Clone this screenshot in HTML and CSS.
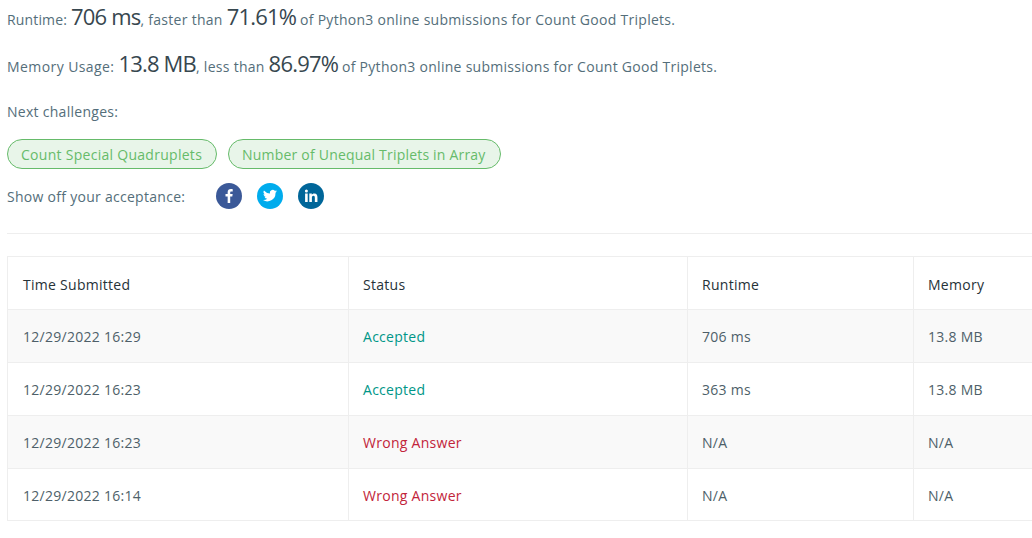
FILE: index.html
```html
<!DOCTYPE html>
<html lang="en">

<head>
    <meta charset="UTF-8">
    <title>Submission Detail</title>
    <link rel="stylesheet" href="styles.css">
</head>

<body>
    <div class="container">
        <p class="result"><span class="label-runtime">Runtime:</span> <span class="big">706 ms</span>, faster than <span class="big">71.61%</span> of Python3 online submissions for Count Good Triplets.</p>
        <p class="result"><span class="label-memory">Memory Usage:</span> <span class="big">13.8 MB</span>, less than <span class="big">86.97%</span> of Python3 online submissions for Count Good Triplets.</p>
        <p class="next-title">Next challenges:</p>
        <div class="tags">
            <a class="tag" href="#">Count Special Quadruplets</a>
            <a class="tag" href="#">Number of Unequal Triplets in Array</a>
        </div>
        <div class="share">
            <span class="share-label">Show off your acceptance:</span>
            <a class="share-icon facebook" href="#">
                <svg viewBox="0 0 26 26" width="26" height="26"><path fill="#fff" d="M14.2 20v-6.4h2.1l.35-2.5h-2.45V9.6c0-.72.2-1.2 1.23-1.2h1.3V6.15c-.23-.03-1-.1-1.9-.1-1.88 0-3.17 1.15-3.17 3.26v1.8H9.5v2.5h2.16V20z"/></svg>
            </a>
            <a class="share-icon twitter" href="#">
                <svg viewBox="0 0 26 26" width="26" height="26"><path fill="#fff" d="M20 8.3c-.52.23-1.07.38-1.65.45.6-.36 1.05-.92 1.26-1.58-.55.33-1.17.56-1.82.69a2.87 2.87 0 0 0-4.9 2.62A8.15 8.15 0 0 1 6.97 7.5a2.87 2.87 0 0 0 .89 3.83 2.85 2.85 0 0 1-1.3-.36v.04c0 1.39.99 2.55 2.3 2.81-.42.12-.87.13-1.3.05.37 1.14 1.43 1.97 2.68 2A5.76 5.76 0 0 1 6 17.06a8.12 8.12 0 0 0 12.5-6.84v-.37c.57-.41 1.08-.92 1.5-1.55z"/></svg>
            </a>
            <a class="share-icon linkedin" href="#">
                <svg viewBox="0 0 26 26" width="26" height="26"><path fill="#fff" d="M7.1 10.6h2.6V19H7.1zM8.4 6.5a1.5 1.5 0 1 1 0 3 1.5 1.5 0 0 1 0-3zM11.3 10.6h2.5v1.15h.04c.35-.66 1.2-1.35 2.47-1.35 2.64 0 3.13 1.74 3.13 4V19h-2.6v-4.1c0-.98-.02-2.24-1.36-2.24-1.37 0-1.58 1.07-1.58 2.17V19h-2.6z"/></svg>
            </a>
        </div>
        <hr class="divider">
        <table class="submissions">
            <thead>
                <tr>
                    <th class="col-time">Time Submitted</th>
                    <th class="col-status">Status</th>
                    <th class="col-runtime">Runtime</th>
                    <th class="col-memory">Memory</th>
                </tr>
            </thead>
            <tbody>
                <tr>
                    <td>12/29/2022 16:29</td>
                    <td class="accepted">Accepted</td>
                    <td>706 ms</td>
                    <td>13.8 MB</td>
                </tr>
                <tr>
                    <td>12/29/2022 16:23</td>
                    <td class="accepted">Accepted</td>
                    <td>363 ms</td>
                    <td>13.8 MB</td>
                </tr>
                <tr>
                    <td>12/29/2022 16:23</td>
                    <td class="wrong">Wrong Answer</td>
                    <td>N/A</td>
                    <td>N/A</td>
                </tr>
                <tr class="last-row">
                    <td>12/29/2022 16:14</td>
                    <td class="wrong">Wrong Answer</td>
                    <td>N/A</td>
                    <td>N/A</td>
                </tr>
            </tbody>
        </table>
    </div>
</body>

</html>
```
FILE: styles.css
```css
html, body {
    margin: 0;
    overflow: hidden;
    background-color: #fff;
}

body {
    font-family: "Open Sans", "Noto Sans", sans-serif;
    font-size: 14px;
    line-height: 20px;
    letter-spacing: .28px;
    color: #546e7a;
}

.container {
    padding: 1px 0 0 7px;
    width: 1100px;
}

.result {
    margin: 0 0 17px;
    height: 30px;
    line-height: 30px;
}

.result .big {
    font-size: 22px;
    letter-spacing: -.8px;
    color: #37474f;
}

.label-runtime {
    letter-spacing: .15px;
}

.label-memory {
    letter-spacing: .42px;
}

.next-title {
    margin: 0 0 17px;
    padding-top: 7px;
}

.tags {
    display: flex;
    gap: 11px;
}

.tag {
    display: block;
    height: 28px;
    line-height: 30px;
    padding: 0 14px 0 13px;
    border: 1px solid #66bb6a;
    border-radius: 15px;
    background-color: #e8f5e9;
    color: #66bb6a;
    text-decoration: none;
}

.tag:last-child {
    letter-spacing: .2px;
}

.share {
    display: flex;
    align-items: center;
    margin-top: 14px;
}

.share-label {
    width: 209px;
    padding-top: 2px;
}

.share-icon {
    display: block;
    width: 26px;
    height: 26px;
    border-radius: 50%;
    margin-right: 15px;
}

.share-icon svg {
    display: block;
}

.facebook {
    background-color: #3b5998;
}

.twitter {
    background-color: #00aced;
}

.linkedin {
    background-color: #006699;
}

.divider {
    margin: 24px 0 22px;
    height: 1px;
    border: none;
    background-color: #eee;
    width: 1025px;
}

.submissions {
    border-collapse: collapse;
    table-layout: fixed;
    width: 1093px;
    border: 1px solid #eee;
}

.submissions th,
.submissions td {
    padding: 2px 15px 0 14px;
    border: 1px solid #eee;
    text-align: left;
    font-weight: normal;
}

.submissions th:first-child,
.submissions td:first-child {
    padding-left: 15px;
}

.submissions td {
    height: 50px;
    color: #4e5f69;
}

.submissions th {
    height: 49px;
    padding-top: 3px;
    color: #263238;
}

.submissions tbody tr:nth-child(odd) {
    background-color: #f9f9f9;
}

.submissions .last-row td {
    height: 49px;
}

.col-time {
    width: 310px;
}

.col-status {
    width: 309px;
}

.col-runtime {
    width: 196px;
}

.submissions td.accepted {
    color: #009688;
}

.submissions td.wrong {
    color: #c2243a;
}
```
